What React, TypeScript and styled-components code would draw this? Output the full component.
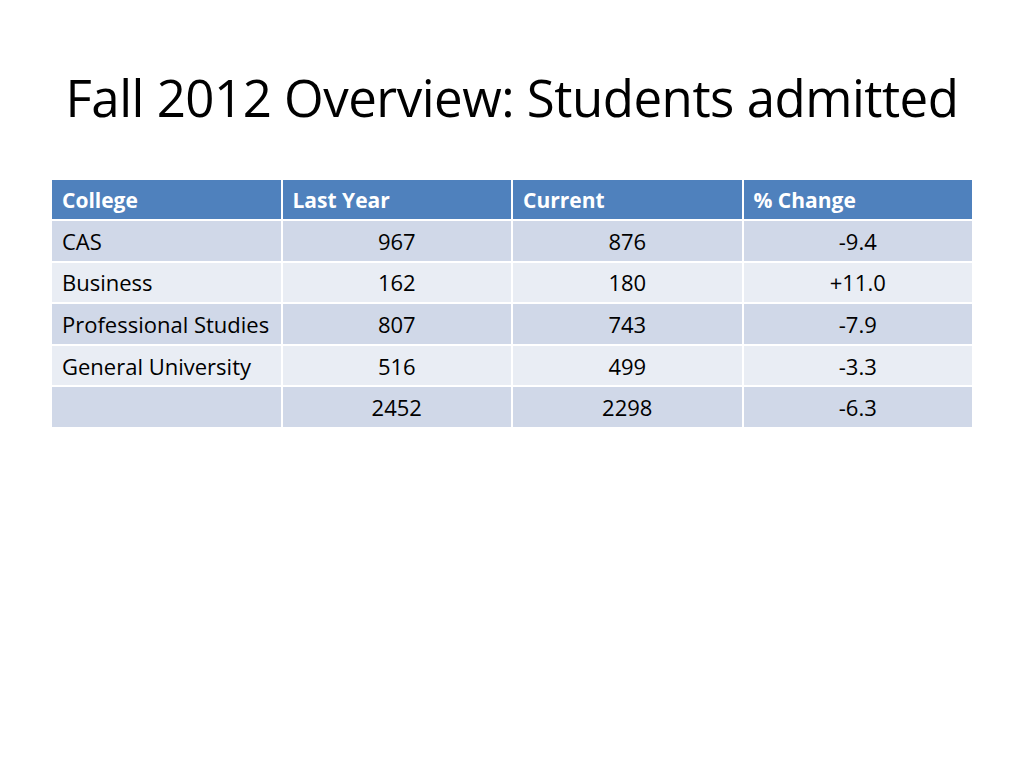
import React from "react";
import styled, { createGlobalStyle } from "styled-components";

const GlobalStyle = createGlobalStyle`
  html, body {
    margin: 0;
    padding: 0;
    background: #ffffff;
  }
  body {
    font-family: "Open Sans", "Noto Sans", "Liberation Sans", sans-serif;
  }
`;

type Row = {
  college: string;
  lastYear: string;
  current: string;
  change: string;
};

const rows: Row[] = [
  { college: "CAS", lastYear: "967", current: "876", change: "-9.4" },
  { college: "Business", lastYear: "162", current: "180", change: "+11.0" },
  { college: "Professional Studies", lastYear: "807", current: "743", change: "-7.9" },
  { college: "General University", lastYear: "516", current: "499", change: "-3.3" },
  { college: "", lastYear: "2452", current: "2298", change: "-6.3" },
];

const headers = ["College", "Last Year", "Current", "% Change"];

const App: React.FC = () => {
  return (
    <>
      <GlobalStyle />
      <Slide>
        <Title>Fall 2012 Overview: Students admitted</Title>
        <Table>
          {headers.map((h) => (
            <HeaderCell key={h}>{h}</HeaderCell>
          ))}
          {rows.map((row, i) => (
            <React.Fragment key={i}>
              <Cell $odd={i % 2 === 0}>{row.college}</Cell>
              <Cell $odd={i % 2 === 0} $center>
                {row.lastYear}
              </Cell>
              <Cell $odd={i % 2 === 0} $center>
                {row.current}
              </Cell>
              <Cell $odd={i % 2 === 0} $center>
                {row.change}
              </Cell>
            </React.Fragment>
          ))}
        </Table>
      </Slide>
    </>
  );
};

const Slide = styled.div`
  width: 1024px;
  height: 768px;
  display: flex;
  flex-direction: column;
  align-items: center;
  box-sizing: border-box;
  padding-top: 62px;
`;

const Title = styled.h1`
  margin: 0;
  height: 70px;
  font-size: 51px;
  font-weight: 400;
  line-height: 70px;
  color: #000000;
  letter-spacing: -0.5px;
`;

const Table = styled.div`
  margin-top: 48px;
  width: 920px;
  display: grid;
  grid-template-columns: repeat(4, 1fr);
  grid-template-rows: 39px repeat(5, 39.6px);
  gap: 2px;
  background: #ffffff;
`;

const HeaderCell = styled.div`
  background: #4f81bd;
  color: #ffffff;
  font-weight: 700;
  font-size: 21px;
  display: flex;
  align-items: center;
  padding-left: 10px;
`;

const Cell = styled.div<{ $odd: boolean; $center?: boolean }>`
  background: ${({ $odd }) => ($odd ? "#d0d8e8" : "#e9edf4")};
  color: #000000;
  font-size: 22px;
  display: flex;
  align-items: center;
  justify-content: ${({ $center }) => ($center ? "center" : "flex-start")};
  padding-left: ${({ $center }) => ($center ? "0" : "10px")};
`;

export default App;
